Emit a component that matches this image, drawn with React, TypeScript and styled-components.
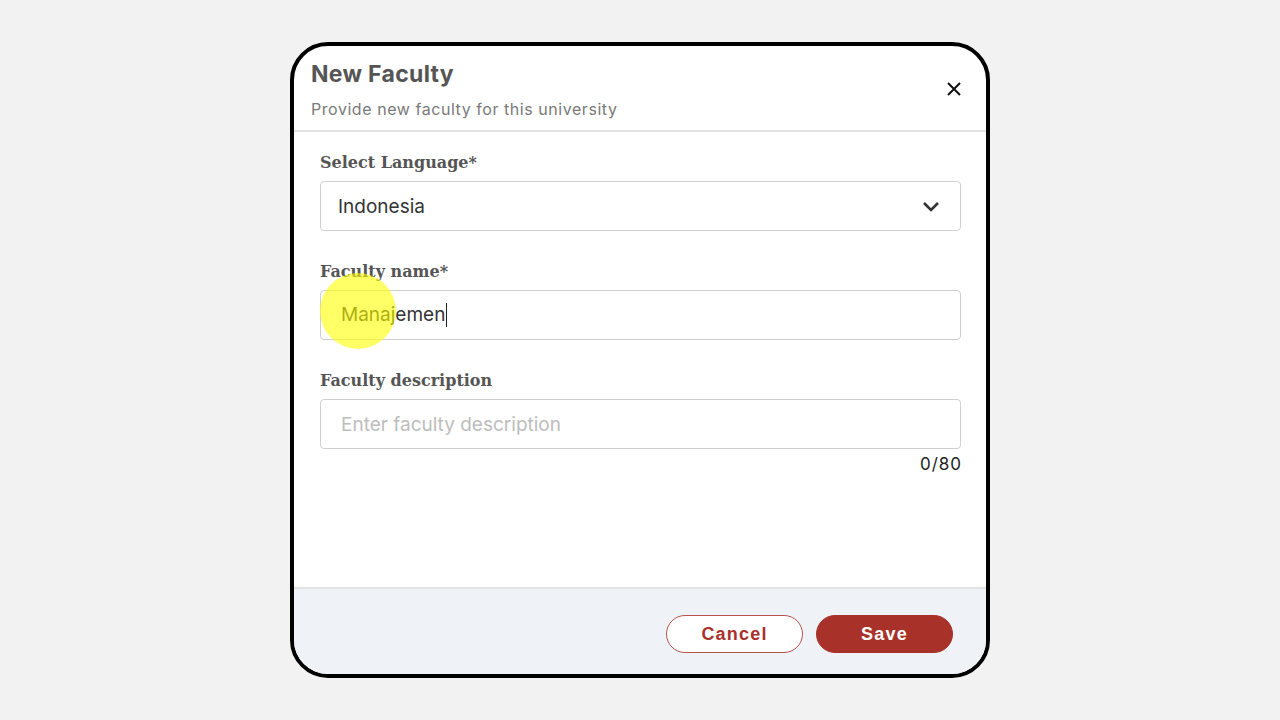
import styled, { createGlobalStyle } from "styled-components";

const GlobalStyle = createGlobalStyle`
  html, body {
    margin: 0;
    padding: 0;
    background: #f2f2f2;
  }
  * {
    box-sizing: border-box;
  }
`;

const Page = styled.div`
  width: 1280px;
  height: 720px;
  display: flex;
  justify-content: center;
  padding-top: 42px;
  font-family: Inter, "Noto Sans", sans-serif;
`;

const Frame = styled.div`
  position: relative;
  width: 700px;
  height: 636px;
  border: 4px solid #000;
  border-radius: 38px;
  background: #fff;
  overflow: hidden;
  display: flex;
  flex-direction: column;
`;

const Header = styled.div`
  display: flex;
  align-items: center;
  justify-content: space-between;
  padding: 14px 24px 11px 17px;
  border-bottom: 2px solid #e3e3e3;
`;

const Titles = styled.div`
  display: flex;
  flex-direction: column;
  gap: 11px;
`;

const Title = styled.div`
  font-size: 23px;
  font-weight: 700;
  color: #555;
  line-height: 28px;
  letter-spacing: 0.3px;
`;

const Subtitle = styled.div`
  font-size: 16px;
  color: #7a7a7a;
  line-height: 20px;
  letter-spacing: 0.55px;
`;

const CloseButton = styled.button`
  border: none;
  background: none;
  padding: 0;
  margin-top: -2px;
  display: flex;
  cursor: pointer;
`;

const Body = styled.div`
  flex: 1;
  padding: 21px 25px 0 26px;
  display: flex;
  flex-direction: column;
`;

const Field = styled.div`
  display: flex;
  flex-direction: column;
  gap: 8px;
  margin-bottom: 31px;
`;

const Label = styled.label`
  font-family: "DejaVu Serif", "Liberation Serif", serif;
  font-weight: 700;
  font-size: 16px;
  line-height: 20px;
  color: #555;
`;

const Box = styled.div<{ $pad?: number }>`
  height: 50px;
  border: 1px solid #cfcfcf;
  border-radius: 4px;
  display: flex;
  align-items: center;
  justify-content: space-between;
  padding: 0 20px 0 ${(p) => p.$pad ?? 20}px;
  font-size: 19px;
  color: #333;
`;

const Placeholder = styled.span`
  color: #bdbdbd;
`;

const Caret = styled.span`
  display: inline-block;
  width: 1px;
  height: 24px;
  background: #222;
  margin-left: 1px;
  vertical-align: middle;
`;

const Counter = styled.div`
  text-align: right;
  font-size: 17px;
  color: #222;
  letter-spacing: 1px;
  margin-top: -26px;
  margin-right: -1px;
`;

const Footer = styled.div`
  height: 87px;
  background: #eff2f7;
  border-top: 2px solid #e3e3e3;
  display: flex;
  justify-content: flex-end;
  align-items: flex-start;
  gap: 13px;
  padding: 26px 33px 0 0;
`;

const Button = styled.button<{ $primary?: boolean }>`
  width: 137px;
  height: 38px;
  border-radius: 19px;
  border: 1px solid ${(p) => (p.$primary ? "#a8312a" : "#b5524c")};
  background: ${(p) => (p.$primary ? "#a8312a" : "#fff")};
  color: ${(p) => (p.$primary ? "#fff" : "#a8312a")};
  font-family: "Liberation Sans", Arial, sans-serif;
  font-weight: 700;
  font-size: 18px;
  letter-spacing: 1.2px;
  cursor: pointer;
`;

const Highlight = styled.div`
  position: absolute;
  left: 26px;
  top: 227px;
  width: 76px;
  height: 76px;
  border-radius: 50%;
  background: rgba(255, 255, 0, 0.6);
  pointer-events: none;
`;

export default function App() {
  return (
    <>
      <GlobalStyle />
      <Page>
        <Frame>
          <Header>
            <Titles>
              <Title>New Faculty</Title>
              <Subtitle>Provide new faculty for this university</Subtitle>
            </Titles>
            <CloseButton aria-label="close">
              <svg width="16" height="16" viewBox="0 0 16 16">
                <path d="M2 2 L14 14 M14 2 L2 14" stroke="#111" strokeWidth="2" />
              </svg>
            </CloseButton>
          </Header>
          <Body>
            <Field>
              <Label>Select Language*</Label>
              <Box $pad={17}>
                <span>Indonesia</span>
                <svg width="18" height="11" viewBox="0 0 18 11">
                  <path d="M2 2 L9 9 L16 2" fill="none" stroke="#333" strokeWidth="2.6" />
                </svg>
              </Box>
            </Field>
            <Field>
              <Label>Faculty name*</Label>
              <Box>
                <span>
                  Manajemen
                  <Caret />
                </span>
              </Box>
            </Field>
            <Field>
              <Label>Faculty description</Label>
              <Box>
                <Placeholder>Enter faculty description</Placeholder>
              </Box>
            </Field>
            <Counter>0/80</Counter>
          </Body>
          <Footer>
            <Button>Cancel</Button>
            <Button $primary>Save</Button>
          </Footer>
          <Highlight />
        </Frame>
      </Page>
    </>
  );
}
